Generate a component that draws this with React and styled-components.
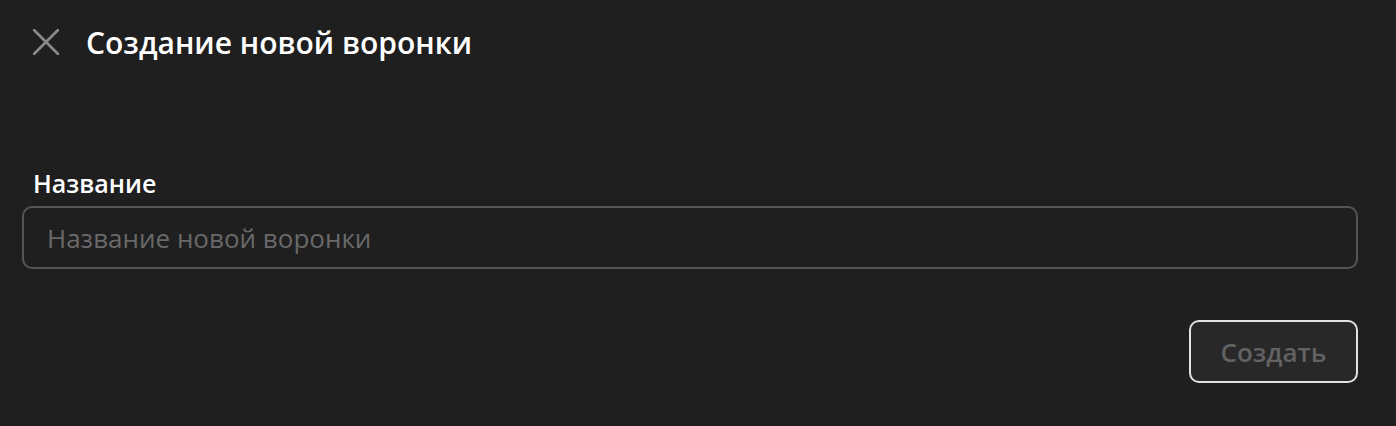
import React from "react";
import styled, { createGlobalStyle } from "styled-components";

const GlobalStyle = createGlobalStyle`
  html, body {
    margin: 0;
    padding: 0;
    background: #1f1f1f;
    font-family: "Open Sans", "Noto Sans", sans-serif;
  }
`;

const Page = styled.div`
  width: 1396px;
  height: 426px;
  box-sizing: border-box;
  background: #1f1f1f;
  padding: 0 38px 0 22px;
  display: flex;
  flex-direction: column;
`;

const Header = styled.div`
  display: flex;
  align-items: center;
  gap: 27px;
  height: 86px;
  padding-left: 11px;
`;

const CloseButton = styled.button`
  background: none;
  border: none;
  padding: 0;
  width: 26px;
  height: 26px;
  margin-top: -3px;
  display: flex;
  align-items: center;
  justify-content: center;
  cursor: pointer;
`;

const Title = styled.h1`
  margin: 0;
  font-size: 30px;
  line-height: 40px;
  font-weight: 600;
  color: #ffffff;
`;

const Field = styled.div`
  margin-top: 82px;
  display: flex;
  flex-direction: column;
  gap: 8px;
`;

const Label = styled.label`
  font-size: 25px;
  line-height: 30px;
  font-weight: 600;
  color: #ffffff;
  padding-left: 11px;
`;

const Input = styled.input`
  height: 63px;
  box-sizing: border-box;
  border: 2px solid #555;
  border-radius: 10px;
  background: #1f1f1f;
  padding: 0 23px;
  font-family: inherit;
  font-size: 26px;
  color: #fff;
  outline: none;

  &::placeholder {
    color: #696969;
  }
`;

const Footer = styled.div`
  display: flex;
  justify-content: flex-end;
  margin-top: 51px;
`;

const SubmitButton = styled.button`
  width: 169px;
  height: 63px;
  box-sizing: border-box;
  border: 2px solid #e2e2e2;
  border-radius: 10px;
  background: #282828;
  color: #626262;
  font-family: inherit;
  font-size: 26px;
  font-weight: 600;
  cursor: default;
`;

export default function App() {
  return (
    <>
      <GlobalStyle />
      <Page>
        <Header>
          <CloseButton aria-label="Закрыть">
            <svg width="26" height="26" viewBox="0 0 26 26" fill="none">
              <path d="M1 1L25 25M25 1L1 25" stroke="#8a8a8a" strokeWidth="2.6" strokeLinecap="round" />
            </svg>
          </CloseButton>
          <Title>Создание новой воронки</Title>
        </Header>
        <Field>
          <Label>Название</Label>
          <Input placeholder="Название новой воронки" />
        </Field>
        <Footer>
          <SubmitButton disabled>Создать</SubmitButton>
        </Footer>
      </Page>
    </>
  );
}
